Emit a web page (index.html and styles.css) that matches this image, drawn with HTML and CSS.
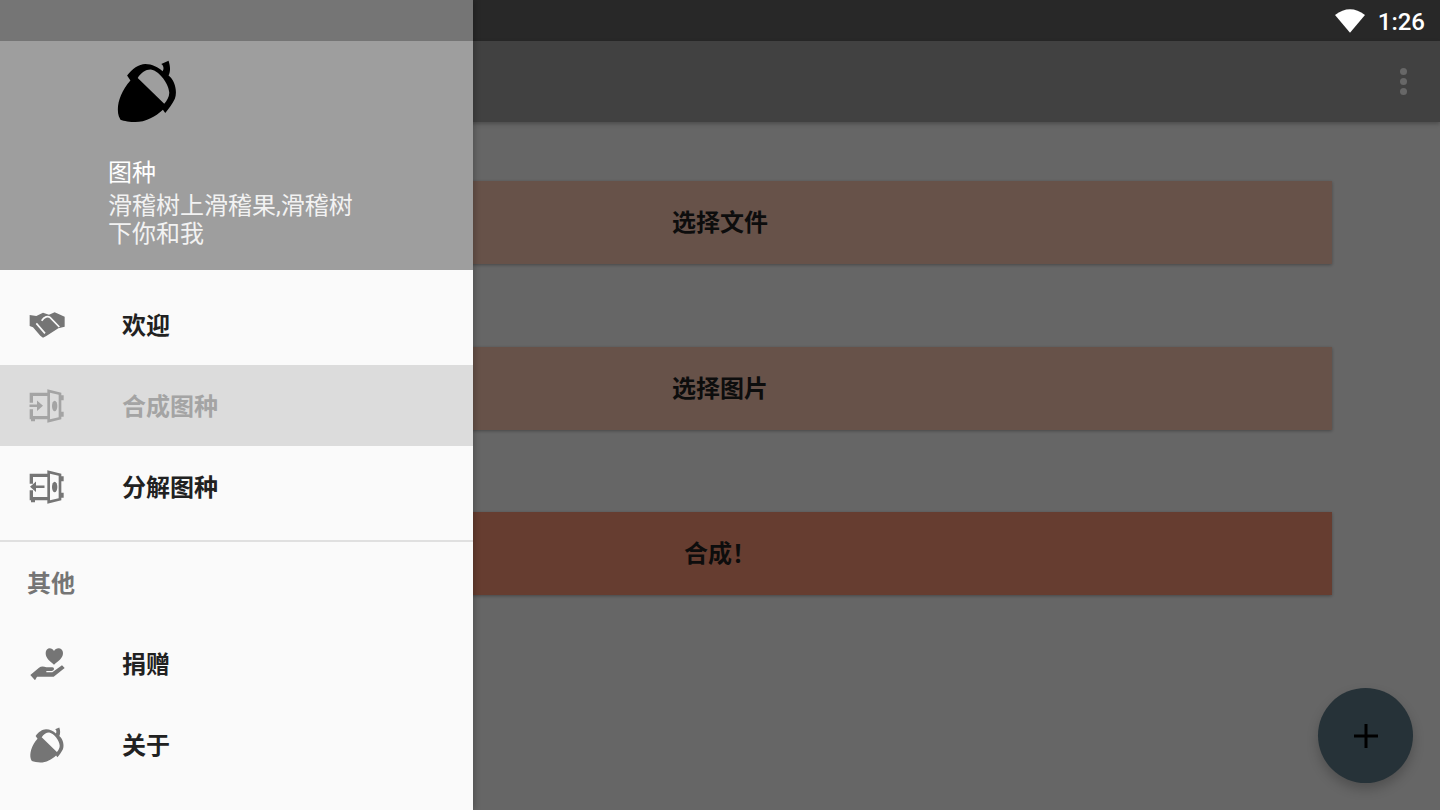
FILE: index.html
```html
<!DOCTYPE html>
<html lang="zh-CN">
<head>
    <meta charset="UTF-8">
    <meta name="viewport" content="width=device-width, initial-scale=1.0">
    <title>图种</title>
    <link rel="stylesheet" href="styles.css">
</head>
<body>

<svg class="defs" width="0" height="0">
    <symbol id="icon-acorn" viewBox="50 28 180 190">
        <path fill-rule="evenodd" d="M80 75C95 55 115 40 135 40C155 40 175 50 187 62C192 54 190 44 183 40L205 30C211 48 211 62 205 75C225 90 232 125 224 145C217 160 205 175 195 188L188 178C165 200 135 215 105 215C90 215 70 212 60 208L55 198C46 170 58 125 90 90ZM112 82C122 66 138 56 152 57C178 62 205 100 207 125C208 138 200 150 192 160Z"/>
    </symbol>
    <symbol id="icon-door" viewBox="88 322 108 106">
        <path d="M90 335H143V345H100V365H90ZM90 385H100V405H143V415H106V421H94V415H90ZM143 325L185 335V343H192V358H185V392H192V407H185V415L143 425ZM151 335V415L177 409V341Z" fill-rule="evenodd"/>
        <ellipse cx="165" cy="375" rx="8" ry="16"/>
    </symbol>
</svg>

<div class="app">
    <div class="status-bar">
        <svg class="wifi" viewBox="287 25 90 70"><path d="M287 42Q332 8 377 42L332 95Z"/></svg>
        <span class="clock">1:26</span>
    </div>
    <div class="toolbar">
        <div class="overflow"><i></i><i></i><i></i></div>
    </div>
    <div class="content">
        <div class="action">选择文件</div>
        <div class="action">选择图片</div>
        <div class="action action-go">合成！</div>
    </div>
    <div class="fab">
        <svg viewBox="0 0 24 24"><path d="M0 10.5H10.5V0H13.5V10.5H24V13.5H13.5V24H10.5V13.5H0Z"/></svg>
    </div>
</div>

<!-- 侧边栏 -->
<div class="drawer">
    <div class="drawer-status"></div>
    <div class="drawer-header">
        <svg class="logo"><use href="#icon-acorn"/></svg>
        <div class="app-name">图种</div>
        <div class="app-motto">滑稽树上滑稽果,滑稽树下你和我</div>
    </div>
    <div class="menu">
        <div class="menu-item">
            <svg class="menu-icon" viewBox="88 81 108 108">
                <path d="M90 105L110 108L130 98L148 104L165 97L195 110V140L176 145L140 168L130 173L122 167L100 142L90 138Z"/>
                <path class="cut" d="M126 122C134 110 145 107 151 112L179 141M110 130L136 160"/>
            </svg>
            <span>欢迎</span>
        </div>
        <div class="menu-item active">
            <svg class="menu-icon"><use href="#icon-door"/><path d="M.5 16.5H8V12.5L14 17.7L8 23V19H.5Z"/></svg>
            <span>合成图种</span>
        </div>
        <div class="menu-item">
            <svg class="menu-icon"><use href="#icon-door"/><path d="M1 17.7L7 12.5V16.5H15.5V19H7V23Z"/></svg>
            <span>分解图种</span>
        </div>
    </div>
    <div class="menu-title">其他</div>
    <div class="menu-item">
        <svg class="menu-icon" viewBox="88 348 108 102">
            <path d="M163 401C150 390 138 382 138 366C138 350 156 347 163 360C170 347 190 350 190 366C190 382 176 390 163 401Z"/>
            <path d="M92 432L118 410C125 405 132 406 140 409H158C165 409 165 420 156 420H140V424H158L187 403L195 411L162 437H112L106 448Z"/>
        </svg>
        <span>捐赠</span>
    </div>
    <div class="menu-item">
        <svg class="menu-icon"><use href="#icon-acorn"/></svg>
        <span>关于</span>
    </div>
</div>

</body>
</html>
```

FILE: styles.css
```css
body {
    margin: 0;
    width: 1440px;
    height: 810px;
    overflow: hidden;
    position: relative;
    font-family: Roboto, "Noto Sans CJK SC", sans-serif;
    background-color: #666666;
}
.defs {
    position: absolute;
}
.app {
    display: flex;
    flex-direction: column;
    height: 810px;
}
.status-bar {
    height: 41px;
    background-color: #282828;
    display: flex;
    align-items: center;
    justify-content: flex-end;
    padding-right: 15px;
    box-sizing: border-box;
    box-shadow: 0 1px 2px rgba(0, 0, 0, 0.3);
}
.wifi {
    width: 30px;
    height: 24px;
    fill: #ffffff;
    margin-right: 13px;
}
.clock {
    font-size: 24px;
    font-weight: 500;
    margin-top: 2px;
    color: #ffffff;
}
.toolbar {
    height: 81px;
    background-color: #414141;
    display: flex;
    align-items: center;
    justify-content: flex-end;
    padding-right: 33px;
    box-shadow: 0 2px 4px rgba(0, 0, 0, 0.25);
}
.overflow {
    display: flex;
    flex-direction: column;
    gap: 3px;
}
.overflow i {
    width: 7px;
    height: 7px;
    border-radius: 50%;
    background-color: #676767;
}
.content {
    flex: 1;
    display: flex;
    flex-direction: column;
    gap: 82.5px;
    padding: 59px 108px 0;
}
.action {
    height: 83px;
    line-height: 85px;
    text-align: center;
    background-color: #675249;
    color: #0d0d0d;
    font-size: 24px;
    font-weight: 700;
    box-shadow: 0 1px 3px rgba(0, 0, 0, 0.3);
}
.action-go {
    background-color: #663d30;
}
.fab {
    position: absolute;
    left: 1318px;
    top: 688px;
    width: 95px;
    height: 95px;
    border-radius: 50%;
    background-color: #263238;
    display: flex;
    align-items: center;
    justify-content: center;
    box-shadow: 0 6px 12px rgba(0, 0, 0, 0.22);
}
.fab svg {
    width: 24px;
    height: 24px;
}
.drawer {
    position: absolute;
    left: 0;
    top: 0;
    width: 473px;
    height: 810px;
    background-color: #fafafa;
    box-shadow: 2px 0 6px rgba(0, 0, 0, 0.2);
}
.drawer-status {
    height: 41px;
    background-color: #757575;
}
.drawer-header {
    height: 229px;
    box-sizing: border-box;
    background-color: #9e9e9e;
    padding: 19px 0 0 108px;
    color: #ffffff;
    font-size: 24px;
    line-height: 28px;
}
.logo {
    display: block;
    width: 60px;
    height: 63px;
    margin: 0 0 36px 9px;
}
.app-name {
    margin-bottom: 5px;
}
.app-motto {
    width: 250px;
    color: #f2f2f2;
}
.menu {
    padding: 14px 0 13px;
    border-bottom: 2px solid #e0e0e0;
}
.menu-item {
    height: 81px;
    display: flex;
    align-items: center;
    padding-left: 29px;
    font-size: 24px;
    font-weight: 700;
    color: #212121;
}
.menu-item span {
    margin-bottom: 2px;
}
.menu-icon {
    width: 36px;
    height: 36px;
    margin-right: 57px;
    fill: #757575;
}
.menu-icon .cut {
    fill: none;
    stroke: #fafafa;
    stroke-width: 5;
}
.active {
    background-color: #dcdcdc;
    color: #a4a4a4;
}
.active .menu-icon {
    fill: #a4a4a4;
}
.menu-title {
    height: 81px;
    line-height: 85px;
    padding-left: 27px;
    font-size: 24px;
    font-weight: 700;
    color: #757575;
}
```
